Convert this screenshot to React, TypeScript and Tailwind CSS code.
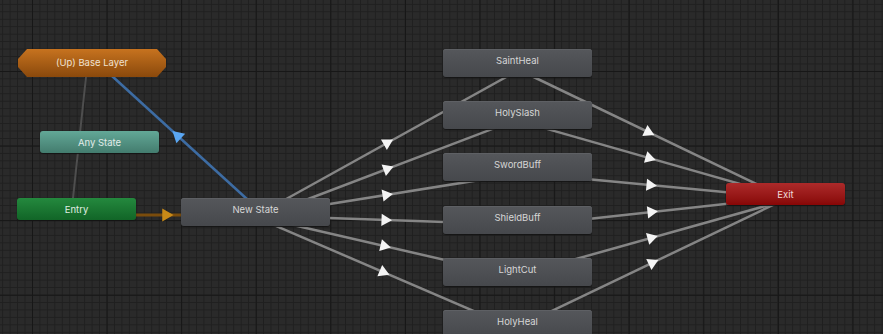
type Seg = { x1: number; y1: number; x2: number; y2: number; ax: number; ay: number }

const outs: Seg[] = [
  { x1: 270, y1: 208, x2: 517, y2: 71, ax: 387, ay: 143 },
  { x1: 270, y1: 213.5, x2: 517, y2: 119.6, ax: 387, ay: 169 },
  { x1: 300, y1: 208.8, x2: 517, y2: 174, ax: 386, ay: 195 },
  { x1: 300, y1: 217, x2: 517, y2: 224.6, ax: 385, ay: 220 },
  { x1: 280, y1: 222, x2: 517, y2: 276.6, ax: 384, ay: 246 },
  { x1: 270, y1: 223.4, x2: 517, y2: 329.6, ax: 383, ay: 272 },
  { x1: 517, y1: 69, x2: 770, y2: 190.6, ax: 648, ay: 132 },
  { x1: 517, y1: 120.4, x2: 770, y2: 192.5, ax: 649, ay: 158 },
  { x1: 517, y1: 172.4, x2: 770, y2: 196.4, ax: 650, ay: 185 },
  { x1: 517, y1: 226.7, x2: 770, y2: 199, ax: 651, ay: 212 },
  { x1: 517, y1: 275.5, x2: 780, y2: 201.9, ax: 651, ay: 238 },
  { x1: 517, y1: 327.7, x2: 780, y2: 201.6, ax: 652, ay: 263 },
]

function arrowPoints(s: Seg, r = 7) {
  const a = Math.atan2(s.y2 - s.y1, s.x2 - s.x1)
  return [0, (2 * Math.PI) / 3, (4 * Math.PI) / 3]
    .map((o) => `${s.ax + r * Math.cos(a + o)},${s.ay + r * Math.sin(a + o)}`)
    .join(' ')
}

function Edges() {
  const blue: Seg = { x1: 248, y1: 200, x2: 112, y2: 76, ax: 178, ay: 136 }
  const orange: Seg = { x1: 135, y1: 215, x2: 181, y2: 215, ax: 166, ay: 215 }
  return (
    <svg className="absolute inset-0" width={883} height={334}>
      <line x1={86} y1={77} x2={73} y2={198} stroke="#4e4e4e" strokeWidth={2} />
      <line x1={blue.x1} y1={blue.y1} x2={blue.x2} y2={blue.y2} stroke="#3d6ca3" strokeWidth={2.5} />
      <polygon points={arrowPoints(blue, 7.5)} fill="#5aa6f2" />
      <line x1={orange.x1} y1={orange.y1} x2={orange.x2} y2={orange.y2} stroke="#7a4c0c" strokeWidth={3} />
      <polygon points={arrowPoints(orange, 7.5)} fill="#c98a18" />
      {outs.map((s, i) => (
        <g key={i}>
          <line x1={s.x1} y1={s.y1} x2={s.x2} y2={s.y2} stroke="#858585" strokeWidth={2.5} />
          <polygon points={arrowPoints(s)} fill="#f4f4f4" />
        </g>
      ))}
    </svg>
  )
}

const states = [
  { name: 'SaintHeal', top: 49 },
  { name: 'HolySlash', top: 101 },
  { name: 'SwordBuff', top: 153 },
  { name: 'ShieldBuff', top: 206 },
  { name: 'LightCut', top: 258 },
  { name: 'HolyHeal', top: 310 },
]

const grayNode =
  'absolute flex h-[28px] w-[149px] items-center justify-center pb-[3px] rounded-[3px] bg-gradient-to-b from-[#55575b] to-[#46484c] text-[9.5px] text-[#d6d6d6] shadow-[0_1px_1px_#151515,inset_0_1px_0_#5e6064]'

const smallNode =
  'absolute flex h-[22px] w-[119px] items-center justify-center pt-[2px] rounded-[3px] bg-gradient-to-b text-[9.5px] shadow-[0_1px_1px_#151515]'

export default function App() {
  return (
    <div
      className="relative h-[334px] w-[883px] overflow-hidden bg-[#2a2a2a] font-['Inter','Noto_Sans',sans-serif] bg-[linear-gradient(to_right,#171717_1px,transparent_1px),linear-gradient(to_bottom,#171717_1px,transparent_1px),linear-gradient(to_right,#1f1f1f_1px,transparent_1px),linear-gradient(to_bottom,#1f1f1f_1px,transparent_1px)] [background-size:74.6px_74.6px,74.6px_74.6px,7.46px_7.46px,7.46px_7.46px] [background-position:32px_-3.6px,32px_-3.6px,2.2px_-3.6px,2.2px_-3.6px]"
    >
      <Edges />

      {/* Layer node */}
      <div className="absolute left-[18px] top-[49px] flex h-[28px] w-[148px] items-center justify-center pt-[1px] bg-gradient-to-b from-[#c7731f] to-[#8a490c] text-[9.5px] text-[#f0e2d2] [clip-path:polygon(9px_0,139px_0,148px_10px,148px_18px,139px_28px,9px_28px,0_18px,0_10px)]">
        (Up) Base Layer
      </div>

      <div className={`${smallNode} left-[40px] top-[131px] from-[#63a897] to-[#437c6e] text-[#e2ece9]`}>Any State</div>

      <div className={`${smallNode} left-[17px] top-[198px] from-[#24893e] to-[#116527] text-[#e0eee4]`}>Entry</div>

      <div className={`${grayNode} left-[181px] top-[198px]`}>New State</div>

      {states.map((s) => (
        <div key={s.name} className={`${grayNode} left-[443px]`} style={{ top: s.top }}>
          {s.name}
        </div>
      ))}

      <div className={`${smallNode} left-[726px] top-[183px] from-[#ad2a2a] to-[#870606] text-[#f0dada]`}>Exit</div>
    </div>
  )
}
